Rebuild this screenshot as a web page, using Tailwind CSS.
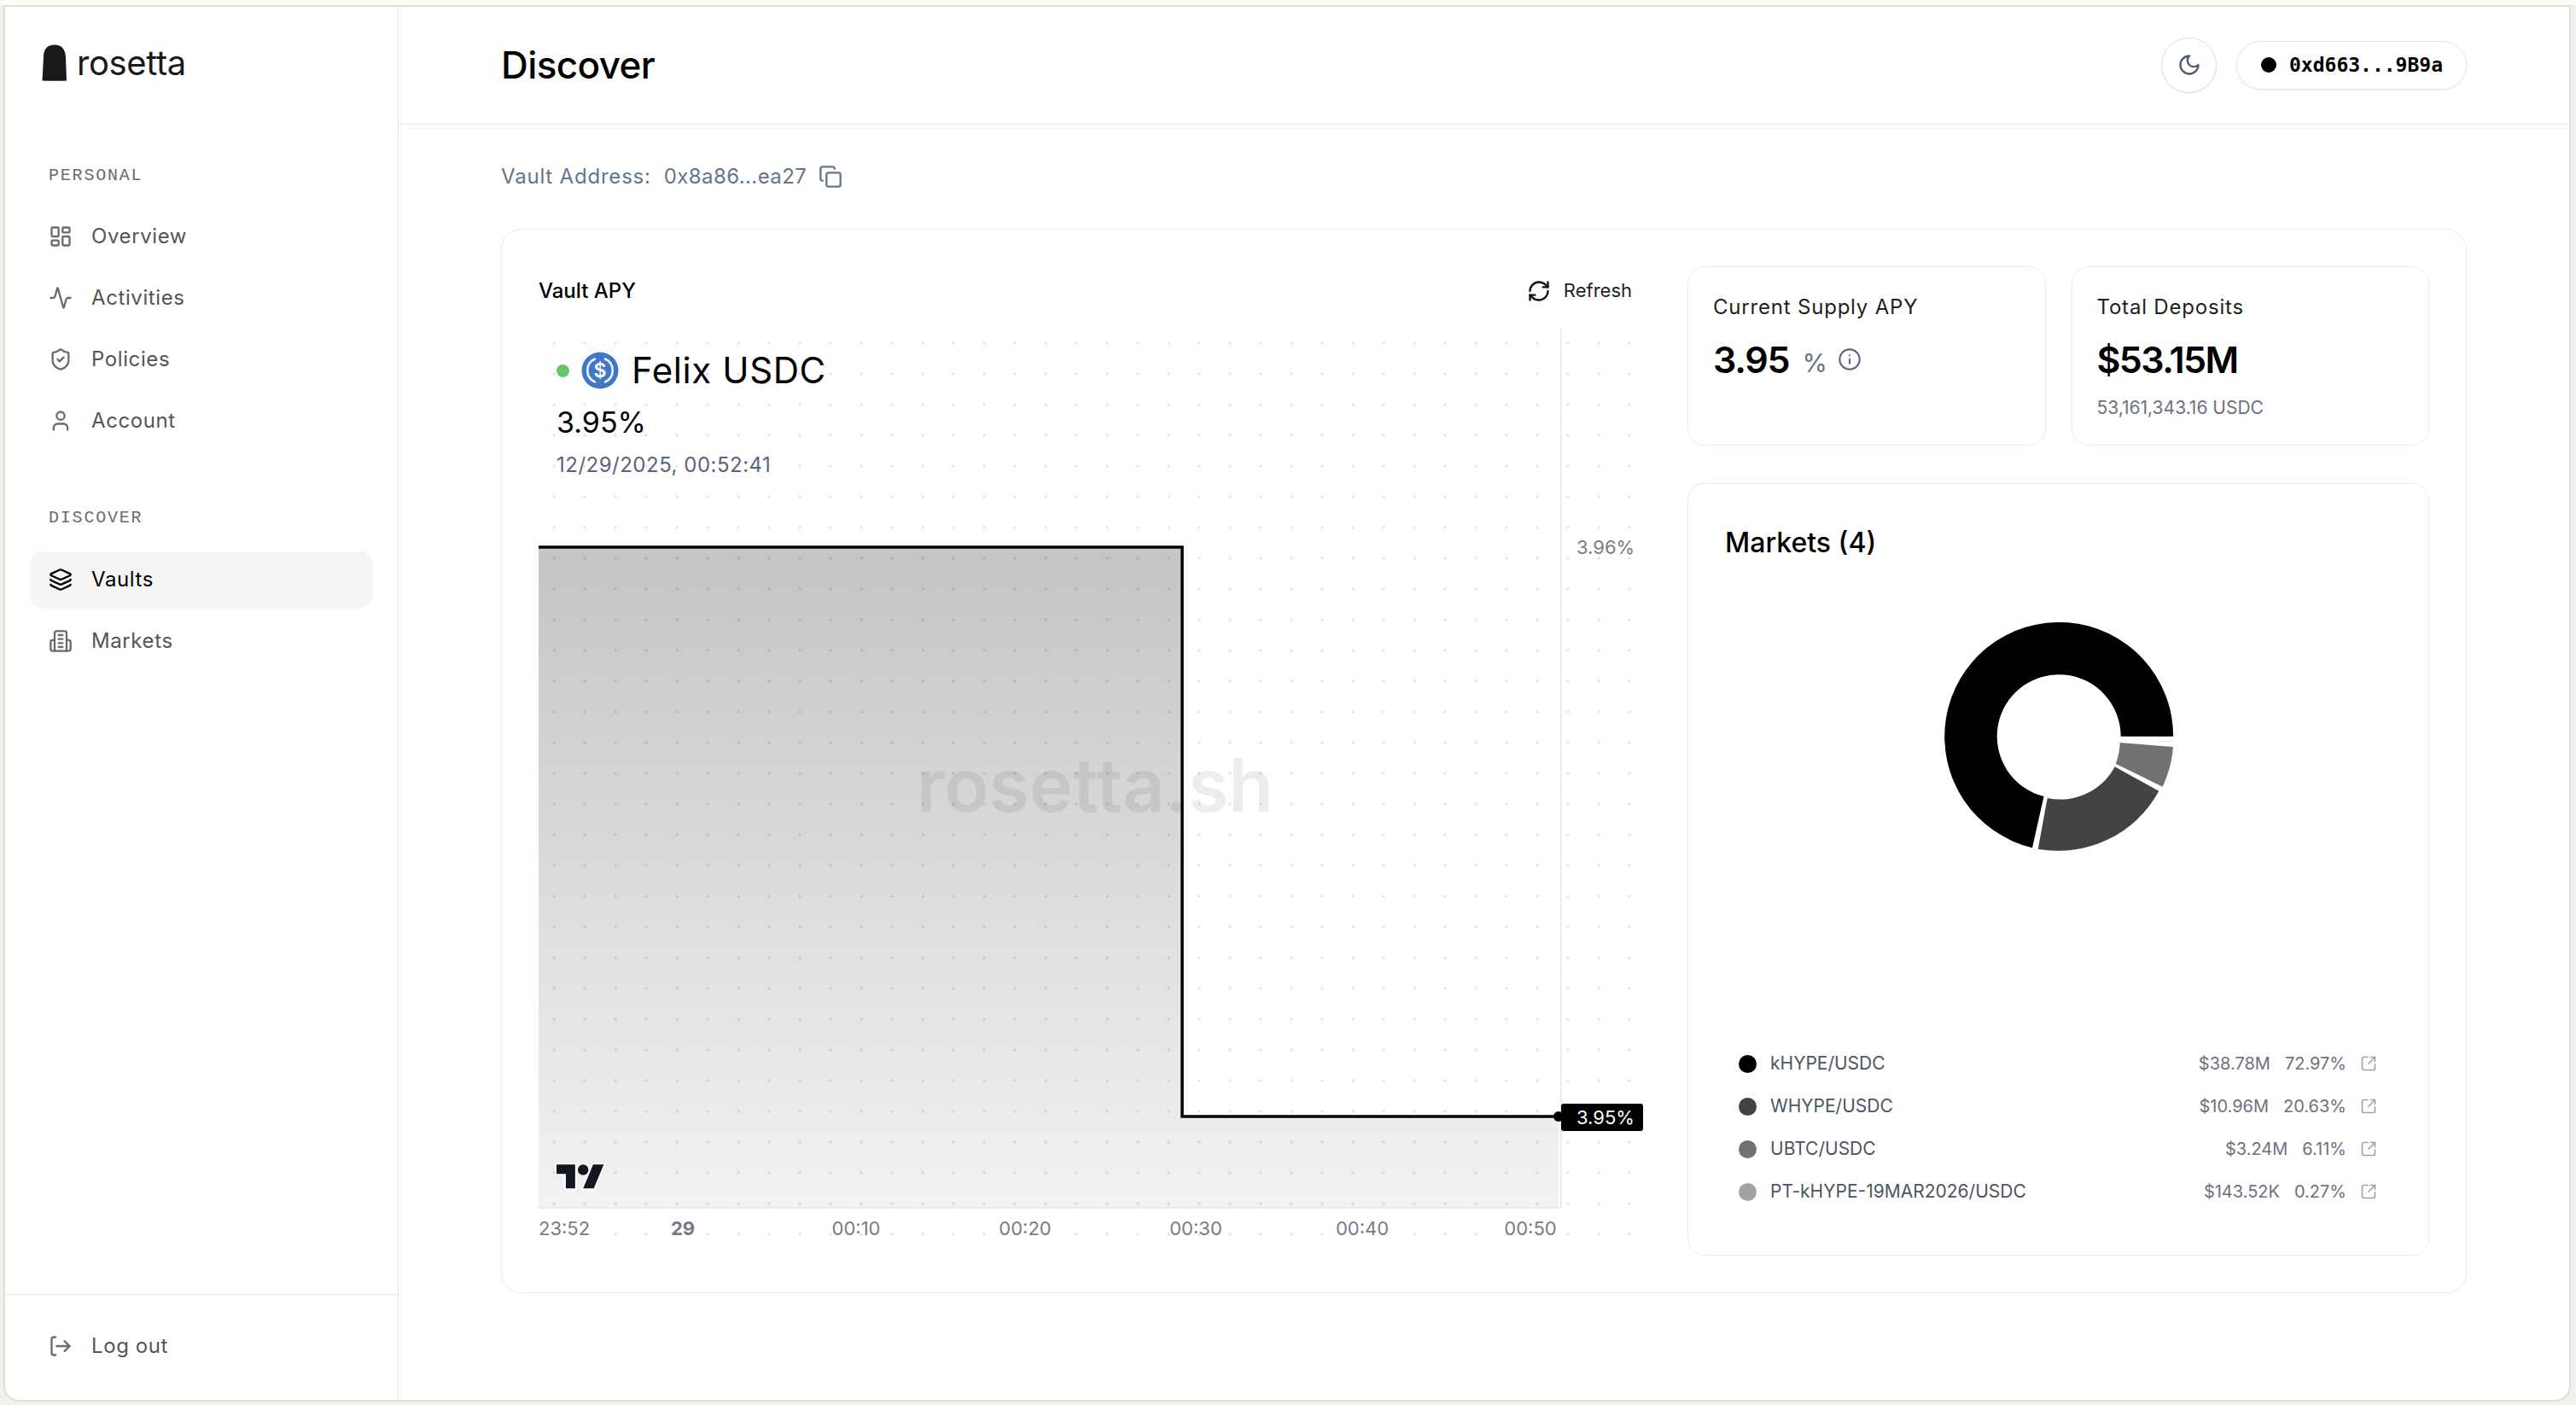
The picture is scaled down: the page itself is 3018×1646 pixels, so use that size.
<!DOCTYPE html>
<html>
<head>
<meta charset="utf-8">
<script src="https://cdn.jsdelivr.net/npm/@tailwindcss/browser@4"></script>
</head>
<body class="w-[3018px] h-[1646px] overflow-hidden bg-[#f1f0ec] font-['Inter',sans-serif]">
<div class="h-[6px] bg-[#fdfcf7]"></div>
<div class="ml-[4px] mr-[6px] h-[1636px] flex bg-white border-2 border-[#dfdfd6] rounded-b-[18px] overflow-hidden">

  <aside class="w-[461px] shrink-0 flex flex-col border-r-[1.5px] border-[#e6e6e6]">
    <div class="flex items-center gap-[11px] pl-[43px] pt-[39px] h-[92px]">
      <svg class="w-[30px] h-[43px]" viewBox="0 0 30 43"><path d="M0.5 42.5 L2 15 Q2 0.5 15 0.5 Q27 0.5 28 15 L29 42.5 Q15 43 0.5 42.5Z" fill="#18191b"/></svg>
      <span class="text-[40px] leading-none tracking-[-0.4px] text-[#18191b] font-normal">rosetta</span>
    </div>
    <div class="mt-[91px] pl-[51px] h-[30px] flex items-center font-['Liberation_Mono',monospace] text-[20px] tracking-[1.8px] text-[#6b6b6b]">PERSONAL</div>
    <nav class="mt-[23px] px-[29px] flex flex-col gap-[6px]">
      <a class="h-[66px] flex items-center gap-[22px] px-[22px] text-[24px] tracking-[0.6px] text-[#555555]">
        <svg class="w-[28px] h-[28px] shrink-0" viewBox="0 0 24 24" fill="none" stroke="#6b6b6b" stroke-width="2" stroke-linecap="round" stroke-linejoin="round"><rect x="3" y="3" width="7" height="9" rx="1"/><rect x="14" y="3" width="7" height="5" rx="1"/><rect x="14" y="12" width="7" height="9" rx="1"/><rect x="3" y="16" width="7" height="5" rx="1"/></svg>
        <span>Overview</span>
      </a>
      <a class="h-[66px] flex items-center gap-[22px] px-[22px] text-[24px] tracking-[0.6px] text-[#555555]">
        <svg class="w-[28px] h-[28px] shrink-0" viewBox="0 0 24 24" fill="none" stroke="#6b6b6b" stroke-width="2" stroke-linecap="round" stroke-linejoin="round"><path d="M22 12h-2.48a2 2 0 0 0-1.93 1.46l-2.35 8.36a.25.25 0 0 1-.48 0L9.24 2.18a.25.25 0 0 0-.48 0l-2.35 8.36A2 2 0 0 1 4.49 12H2"/></svg>
        <span>Activities</span>
      </a>
      <a class="h-[66px] flex items-center gap-[22px] px-[22px] text-[24px] tracking-[0.6px] text-[#555555]">
        <svg class="w-[28px] h-[28px] shrink-0" viewBox="0 0 24 24" fill="none" stroke="#6b6b6b" stroke-width="2" stroke-linecap="round" stroke-linejoin="round"><path d="M20 13c0 5-3.5 7.5-7.66 8.95a1 1 0 0 1-.67-.01C7.5 20.5 4 18 4 13V6a1 1 0 0 1 1-1c2 0 4.5-1.2 6.24-2.72a1.17 1.17 0 0 1 1.52 0C14.51 3.81 17 5 19 5a1 1 0 0 1 1 1z"/><path d="m9 12 2 2 4-4"/></svg>
        <span>Policies</span>
      </a>
      <a class="h-[66px] flex items-center gap-[22px] px-[22px] text-[24px] tracking-[0.6px] text-[#555555]">
        <svg class="w-[28px] h-[28px] shrink-0" viewBox="0 0 24 24" fill="none" stroke="#6b6b6b" stroke-width="2" stroke-linecap="round" stroke-linejoin="round"><path d="M19 21v-2a4 4 0 0 0-4-4H9a4 4 0 0 0-4 4v2"/><circle cx="12" cy="7" r="4"/></svg>
        <span>Account</span>
      </a>
    </nav>
    <div class="mt-[66px] pl-[51px] h-[30px] flex items-center font-['Liberation_Mono',monospace] text-[20px] tracking-[1.8px] text-[#6b6b6b]">DISCOVER</div>
    <nav class="mt-[24px] px-[29px] flex flex-col gap-[6px]">
      <a class="h-[66px] flex items-center gap-[22px] px-[22px] text-[24px] tracking-[0.6px] text-black bg-[#f5f5f5] rounded-[16px] shadow-[0_1px_3px_rgba(0,0,0,0.04)]">
        <svg class="w-[28px] h-[28px] shrink-0" viewBox="0 0 24 24" fill="none" stroke="#000" stroke-width="2" stroke-linecap="round" stroke-linejoin="round"><path d="M12.83 2.18a2 2 0 0 0-1.66 0L2.6 6.08a1 1 0 0 0 0 1.83l8.58 3.91a2 2 0 0 0 1.66 0l8.58-3.9a1 1 0 0 0 0-1.83z"/><path d="M2 12a1 1 0 0 0 .58.91l8.6 3.91a2 2 0 0 0 1.65 0l8.58-3.9A1 1 0 0 0 22 12"/><path d="M2 17a1 1 0 0 0 .58.91l8.6 3.91a2 2 0 0 0 1.65 0l8.58-3.9A1 1 0 0 0 22 17"/></svg>
        <span>Vaults</span>
      </a>
      <a class="h-[66px] flex items-center gap-[22px] px-[22px] text-[24px] tracking-[0.6px] text-[#555555]">
        <svg class="w-[28px] h-[28px] shrink-0" viewBox="0 0 24 24" fill="none" stroke="#6b6b6b" stroke-width="2" stroke-linecap="round" stroke-linejoin="round"><path d="M6 22V4a2 2 0 0 1 2-2h8a2 2 0 0 1 2 2v18Z"/><path d="M6 11H4a2 2 0 0 0-2 2v7a2 2 0 0 0 2 2h2"/><path d="M18 11h2a2 2 0 0 1 2 2v7a2 2 0 0 1-2 2h-2"/><path d="M10 6h4"/><path d="M10 10h4"/><path d="M10 14h4"/><path d="M10 18h4"/></svg>
        <span>Markets</span>
      </a>
    </nav>
    <div class="mt-auto h-[124px] border-t-[1.5px] border-[#e6e6e6] px-[29px] flex items-center">
      <a class="flex items-center gap-[22px] px-[22px] text-[24px] tracking-[0.6px] text-[#555555] mb-[4px]">
        <svg class="w-[28px] h-[28px] shrink-0" viewBox="0 0 24 24" fill="none" stroke="#6b6b6b" stroke-width="2" stroke-linecap="round" stroke-linejoin="round"><path d="M7 3H5a2 2 0 0 0-2 2v14a2 2 0 0 0 2 2h2"/><path d="M8 12h13"/><path d="m16 7 5 5-5 5"/></svg>
        <span>Log out</span>
      </a>
    </div>
  </aside>

  <div class="flex-1 flex flex-col min-w-0">
    <header class="h-[138px] shrink-0 border-b-[1.5px] border-[#e6e6e6] pl-[120px] pr-[120px] flex items-center justify-between">
      <h1 class="text-[44px] leading-none font-medium text-black tracking-[-0.6px] mb-[2px]">Discover</h1>
      <div class="flex items-center gap-[23px] mb-[1px]">
        <button class="w-[65px] h-[65px] rounded-full border border-[#d4dbe6] bg-white flex items-center justify-center shadow-[0_1px_2px_rgba(0,0,0,0.04)]">
          <svg class="w-[28px] h-[28px]" viewBox="0 0 24 24" fill="none" stroke="#4f5b70" stroke-width="2" stroke-linecap="round" stroke-linejoin="round"><path d="M12 3a6 6 0 0 0 9 9 9 9 0 1 1-9-9Z"/></svg>
        </button>
        <div class="h-[57px] w-[270px] rounded-full border border-[#e4e6ec] bg-white flex items-center pl-[28px] gap-[15px] shadow-[0_1px_3px_rgba(0,0,0,0.06)]">
          <span class="w-[18px] h-[18px] rounded-full bg-black"></span>
          <span class="font-['DejaVu_Sans_Mono',monospace] text-[23px] font-bold text-black">0xd663...9B9a</span>
        </div>
      </div>
    </header>

    <main class="pl-[120px] pr-[120px]">
      <div class="h-[122px] flex items-center text-[24px] text-[#64748b]">
        <span class="tracking-[0.8px]">Vault Address:</span>
        <span class="ml-[15px] tracking-[0.4px]">0x8a86...ea27</span>
        <svg class="ml-[14px] w-[28px] h-[28px]" viewBox="0 0 24 24" fill="none" stroke="#64748b" stroke-width="2" stroke-linecap="round" stroke-linejoin="round"><rect x="8" y="8" width="14" height="14" rx="2"/><path d="M4 16c-1.1 0-2-.9-2-2V4c0-1.1.9-2 2-2h10c1.1 0 2 .9 2 2"/></svg>
      </div>

      <section class="h-[1247px] rounded-[24px] border-[1.5px] border-[#e9eaee] p-[43px] flex gap-[44px] bg-white">
        <div class="w-[1302px] shrink-0 flex flex-col">
          <div class="h-[57px] flex items-center justify-between pr-[21px]">
            <span class="text-[24px] font-medium text-black">Vault APY</span>
            <div class="flex items-center gap-[15px] text-[22px] text-[#222222]">
              <svg class="w-[28px] h-[28px]" viewBox="0 0 24 24" fill="none" stroke="#111" stroke-width="2" stroke-linecap="round" stroke-linejoin="round"><path d="M3 12a9 9 0 0 1 9-9 9.75 9.75 0 0 1 6.74 2.74L21 8"/><path d="M21 3v5h-5"/><path d="M21 12a9 9 0 0 1-9 9 9.75 9.75 0 0 1-6.74-2.74L3 16"/><path d="M8 16H3v5"/></svg>
              <span>Refresh</span>
            </div>
          </div>
          <div class="relative flex-1 mt-[16px]">
            <svg class="absolute inset-0 w-[1302px] h-[1087px]" viewBox="631 385 1302 1087">
              <defs>
                <pattern id="dots" patternUnits="userSpaceOnUse" x="631" y="384" width="36" height="36"><circle cx="18" cy="18" r="1.7" fill="#e2e2e8"/></pattern>
                <linearGradient id="area" gradientUnits="userSpaceOnUse" x1="0" y1="641" x2="0" y2="1415"><stop offset="0" stop-color="#000" stop-opacity="0.23"/><stop offset="1" stop-color="#000" stop-opacity="0.05"/></linearGradient>
              </defs>
              <rect x="631" y="385" width="1284" height="1072" fill="url(#dots)"/>
              <path d="M631 641H1385V1308H1826V1415H631Z" fill="url(#area)"/>
              <path d="M1829 385V1415H631" fill="none" stroke="#e6e6ea" stroke-width="1.5"/>
              <text x="1283" y="951" text-anchor="middle" class="text-[86px] font-semibold fill-black/[0.07]">rosetta.sh</text>
              <path d="M631 641H1385V1308H1826" fill="none" stroke="#000" stroke-width="3.5"/>
              <circle cx="1826" cy="1308" r="6" fill="#000"/>
              <rect x="1829" y="1293" width="96" height="32" rx="3" fill="#000"/>
              <text x="1847" y="1317" class="text-[22px] fill-white">3.95%</text>
              <text x="1847" y="649" class="text-[22px] fill-[#787b86]">3.96%</text>
              <g class="text-[22px] fill-[#787b86]">
                <text x="631" y="1447">23:52</text>
                <text x="800" y="1447" text-anchor="middle" class="font-bold">29</text>
                <text x="1003" y="1447" text-anchor="middle">00:10</text>
                <text x="1201" y="1447" text-anchor="middle">00:20</text>
                <text x="1401" y="1447" text-anchor="middle">00:30</text>
                <text x="1596" y="1447" text-anchor="middle">00:40</text>
                <text x="1793" y="1447" text-anchor="middle">00:50</text>
              </g>
              <g transform="translate(652 1358) scale(1.56 1.56)"><path d="M14 22H7V11H0V4h14v18zM28 22h-8l7.5-18h8L28 22z" fill="#131722" stroke="#fff" stroke-width="2.5" paint-order="stroke"/><circle cx="20" cy="8" r="4" fill="#131722" stroke="#fff" stroke-width="1" paint-order="stroke"/></g>
            </svg>
            <div class="absolute left-[21px] top-[25px] flex flex-col">
              <div class="flex items-center h-[48px]">
                <span class="w-[15px] h-[15px] rounded-full bg-[#66c66f]"></span>
                <svg class="ml-[14px] w-[44px] h-[44px]" viewBox="0 0 44 44"><circle cx="22" cy="22" r="21.5" fill="#3f78c4"/><path d="M16 8.5a14.8 14.8 0 0 0 0 27M28 8.5a14.8 14.8 0 0 1 0 27" fill="none" stroke="#fff" stroke-width="2.6" stroke-linecap="round" opacity="0.9"/><text x="22" y="30" text-anchor="middle" fill="#fff" class="text-[23px] font-semibold">$</text></svg>
                <span class="ml-[15px] text-[42px] leading-none text-black tracking-[0.6px]">Felix USDC</span>
              </div>
              <div class="mt-[13px] text-[34px] leading-[48px] text-black">3.95%</div>
              <div class="mt-[9px] text-[24px] leading-[34px] tracking-[0.5px] text-[#5b6478]">12/29/2025, 00:52:41</div>
            </div>
          </div>
        </div>

        <div class="flex-1 flex flex-col gap-[44px] min-w-0">
          <div class="grid grid-cols-2 gap-[30px]">
            <div class="h-[210px] rounded-[20px] border-[1.5px] border-[#e9eaee] pl-[29px] pt-[30px]">
              <div class="text-[24px] leading-[34px] tracking-[0.8px] text-[#1f1f1f]">Current Supply APY</div>
              <div class="flex items-center mt-[17px] h-[54px]">
                <span class="text-[43px] leading-none font-semibold text-black tracking-[-1.2px]">3.95</span>
                <span class="ml-[15px] mt-[8px] text-[30px] leading-none text-[#64748b]">%</span>
                <svg class="ml-[12px] w-[28px] h-[28px]" viewBox="0 0 24 24" fill="none" stroke="#5b6478" stroke-width="1.8" stroke-linecap="round" stroke-linejoin="round"><circle cx="12" cy="12" r="10"/><path d="M12 16v-4"/><path d="M12 8h.01"/></svg>
              </div>
            </div>
            <div class="h-[210px] rounded-[20px] border-[1.5px] border-[#e9eaee] pl-[29px] pt-[30px]">
              <div class="text-[24px] leading-[34px] tracking-[0.8px] text-[#1f1f1f]">Total Deposits</div>
              <div class="flex items-center mt-[17px] h-[54px]">
                <span class="text-[43px] leading-none font-semibold text-black tracking-[-1.6px]">$53.15M</span>
              </div>
              <div class="mt-[15px] text-[21px] leading-[30px] text-[#6b7280]">53,161,343.16 USDC</div>
            </div>
          </div>
          <div class="flex-1 rounded-[20px] border-[1.5px] border-[#e9eaee] flex flex-col">
            <div class="pl-[43px] pt-[47px] text-[32px] leading-[44px] font-medium text-black">Markets (4)</div>
            <svg class="self-start ml-[273px] mt-[41px] w-[320px] h-[320px]" viewBox="0 0 320 320">
              <path d="M295.2 163.8A134 134 0 1 0 130 294.2L143.5 234A72.5 72.5 0 1 1 233.7 163.8Z" fill="#000"/>
              <path d="M136.7 295.7A134 134 0 0 0 278.3 227.7L226.7 199.3A72.5 72.5 0 0 1 147.7 236Z" fill="#434343"/>
              <path d="M282.7 222.7A134 134 0 0 0 295 176L232.7 171A72.5 72.5 0 0 1 227.7 195.7Z" fill="#717171"/>
              <path d="M277 169L295 170" stroke="#e5e5e5" stroke-width="1" fill="none"/>
            </svg>
            <div class="mt-[202px] pl-[59px] pr-[60px] flex flex-col text-[21px]">
              <div class="h-[50px] flex items-center"><span class="w-[21px] h-[21px] rounded-full bg-black shrink-0"></span><span class="ml-[16px] text-[#4b5563]">kHYPE/USDC</span><span class="ml-auto text-[20px] text-[#6b7280]">$38.78M</span><span class="ml-[17px] text-[20px] text-[#6b7280]">72.97%</span><svg class="ml-[16px] w-[20px] h-[20px]" viewBox="0 0 24 24" fill="none" stroke="#9ca3af" stroke-width="2" stroke-linecap="round" stroke-linejoin="round"><path d="M21 13v6a2 2 0 0 1-2 2H5a2 2 0 0 1-2-2V5c0-1.1.9-2 2-2h6"/><path d="M21 3l-9 9"/><path d="M15 3h6v6"/></svg></div>
              <div class="h-[50px] flex items-center"><span class="w-[21px] h-[21px] rounded-full bg-[#434343] shrink-0"></span><span class="ml-[16px] text-[#4b5563]">WHYPE/USDC</span><span class="ml-auto text-[20px] text-[#6b7280]">$10.96M</span><span class="ml-[17px] text-[20px] text-[#6b7280]">20.63%</span><svg class="ml-[16px] w-[20px] h-[20px]" viewBox="0 0 24 24" fill="none" stroke="#9ca3af" stroke-width="2" stroke-linecap="round" stroke-linejoin="round"><path d="M21 13v6a2 2 0 0 1-2 2H5a2 2 0 0 1-2-2V5c0-1.1.9-2 2-2h6"/><path d="M21 3l-9 9"/><path d="M15 3h6v6"/></svg></div>
              <div class="h-[50px] flex items-center"><span class="w-[21px] h-[21px] rounded-full bg-[#717171] shrink-0"></span><span class="ml-[16px] text-[#4b5563]">UBTC/USDC</span><span class="ml-auto text-[20px] text-[#6b7280]">$3.24M</span><span class="ml-[17px] text-[20px] text-[#6b7280]">6.11%</span><svg class="ml-[16px] w-[20px] h-[20px]" viewBox="0 0 24 24" fill="none" stroke="#9ca3af" stroke-width="2" stroke-linecap="round" stroke-linejoin="round"><path d="M21 13v6a2 2 0 0 1-2 2H5a2 2 0 0 1-2-2V5c0-1.1.9-2 2-2h6"/><path d="M21 3l-9 9"/><path d="M15 3h6v6"/></svg></div>
              <div class="h-[50px] flex items-center"><span class="w-[21px] h-[21px] rounded-full bg-[#a3a3a3] shrink-0"></span><span class="ml-[16px] text-[#4b5563]">PT-kHYPE-19MAR2026/USDC</span><span class="ml-auto text-[20px] text-[#6b7280]">$143.52K</span><span class="ml-[17px] text-[20px] text-[#6b7280]">0.27%</span><svg class="ml-[16px] w-[20px] h-[20px]" viewBox="0 0 24 24" fill="none" stroke="#9ca3af" stroke-width="2" stroke-linecap="round" stroke-linejoin="round"><path d="M21 13v6a2 2 0 0 1-2 2H5a2 2 0 0 1-2-2V5c0-1.1.9-2 2-2h6"/><path d="M21 3l-9 9"/><path d="M15 3h6v6"/></svg></div>
            </div>
          </div>
        </div>
      </section>
    </main>
  </div>
</div>
</body>
</html>
